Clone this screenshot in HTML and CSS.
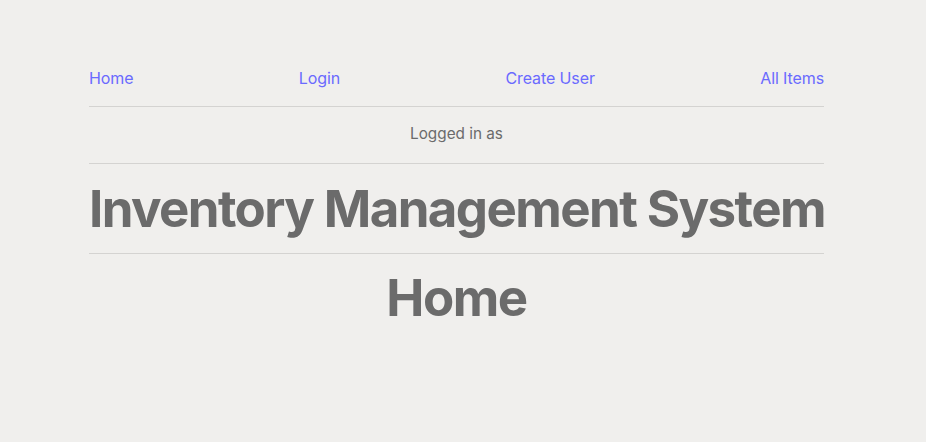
FILE: index.html
```html
<!DOCTYPE html>
<html>
<head>
<meta charset="utf-8">
<link rel="stylesheet" href="styles.css">
</head>
<body>
<div class="page">
  <nav class="nav">
    <a href="#">Home</a>
    <a href="#">Login</a>
    <a href="#">Create User</a>
    <a href="#">All Items</a>
  </nav>
  <div class="status">Logged in as</div>
  <h1 class="title">Inventory Management System</h1>
  <h2 class="subtitle">Home</h2>
</div>
</body>
</html>
```
FILE: styles.css
```css
html, body {
  margin: 0;
  padding: 0;
  background: #f0efed;
}
body {
  font-family: Inter, "Noto Sans", sans-serif;
  color: #6b6b6b;
}
.page {
  width: 735px;
  margin-left: 89px;
  padding-top: 66px;
}
.nav {
  display: flex;
  justify-content: space-between;
  font-size: 16px;
  line-height: 24px;
  letter-spacing: -0.1px;
  padding-bottom: 16px;
  border-bottom: 1px solid #d4d3d1;
}
.nav a {
  color: #6a6aff;
  text-decoration: none;
}
.status {
  text-align: center;
  font-size: 15.3px;
  line-height: 22px;
  padding: 16px 0 18px;
  border-bottom: 1px solid #d4d3d1;
}
.title {
  margin: 0;
  text-align: center;
  font-size: 51px;
  font-weight: 700;
  line-height: 60px;
  letter-spacing: -1.6px;
  padding: 15px 0 14px;
  border-bottom: 1px solid #d4d3d1;
  white-space: nowrap;
}
.subtitle {
  margin: 0;
  text-align: center;
  font-size: 51px;
  font-weight: 700;
  line-height: 60px;
  letter-spacing: -1.5px;
  padding-top: 14px;
}
```
